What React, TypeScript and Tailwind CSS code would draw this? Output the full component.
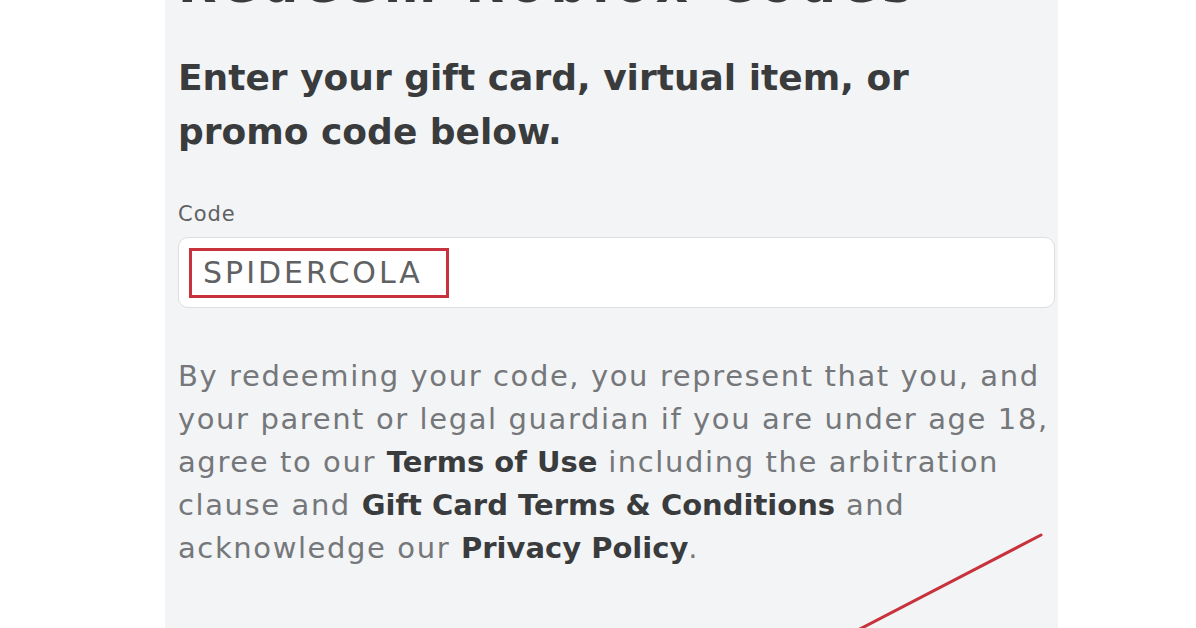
import React from "react";

const font = { fontFamily: '"DejaVu Sans", "Liberation Sans", sans-serif' };

function Link({ children }: { children: React.ReactNode }) {
  return (
    <span className="font-semibold tracking-normal text-[#393b3d]">
      {children}
    </span>
  );
}

function App() {
  return (
    <div
      className="relative h-[628px] w-[1196px] overflow-hidden bg-white"
      style={font}
    >
      <div className="ml-[165px] flex h-full w-[893px] flex-col bg-[#f2f4f5] pl-[13px] pr-[3px]">
        {/* clipped page title */}
        <div className="h-[8px] overflow-hidden">
          <h1 className="-mt-[44px] whitespace-nowrap text-[50px] font-bold leading-[58px] tracking-[6px] text-[#393b3d]">
            Redeem Roblox Codes
          </h1>
        </div>

        <h2 className="mt-[43px] whitespace-nowrap text-[36px] font-bold leading-[54px] text-[#393b3d]">
          Enter your gift card, virtual item, or
          <br />
          promo code below.
        </h2>

        <label className="mt-[43px] text-[21px] leading-[24px] tracking-[1px] text-[#606162]">
          Code
        </label>

        {/* code input */}
        <div className="mt-[11px] flex h-[71px] items-center rounded-[10px] border border-[#dcdee0] bg-white px-[10px]">
          <div className="flex h-[50px] w-[260px] items-center border-[3px] border-[#c8323c] px-[11px] text-[30px] tracking-[3px] text-[#606162]">
            SPIDERCOLA
          </div>
        </div>

        <p className="mt-[47px] whitespace-nowrap text-[29px] leading-[43px] tracking-[1.6px] text-[#75777a]">
          By redeeming your code, you represent that you, and
          <br />
          your parent or legal guardian if you are under age 18,
          <br />
          agree to our <Link>Terms of Use</Link> including the arbitration
          <br />
          clause and <Link>Gift Card Terms &amp; Conditions</Link> and
          <br />
          acknowledge our <Link>Privacy Policy</Link>.
        </p>
      </div>

      {/* red annotation line */}
      <svg
        className="absolute left-0 top-0"
        width="1196"
        height="628"
        viewBox="0 0 1196 628"
      >
        <line
          x1="1041"
          y1="535"
          x2="858"
          y2="630"
          stroke="#c8323c"
          strokeWidth="3"
          strokeLinecap="round"
        />
      </svg>
    </div>
  );
}

export default App;
